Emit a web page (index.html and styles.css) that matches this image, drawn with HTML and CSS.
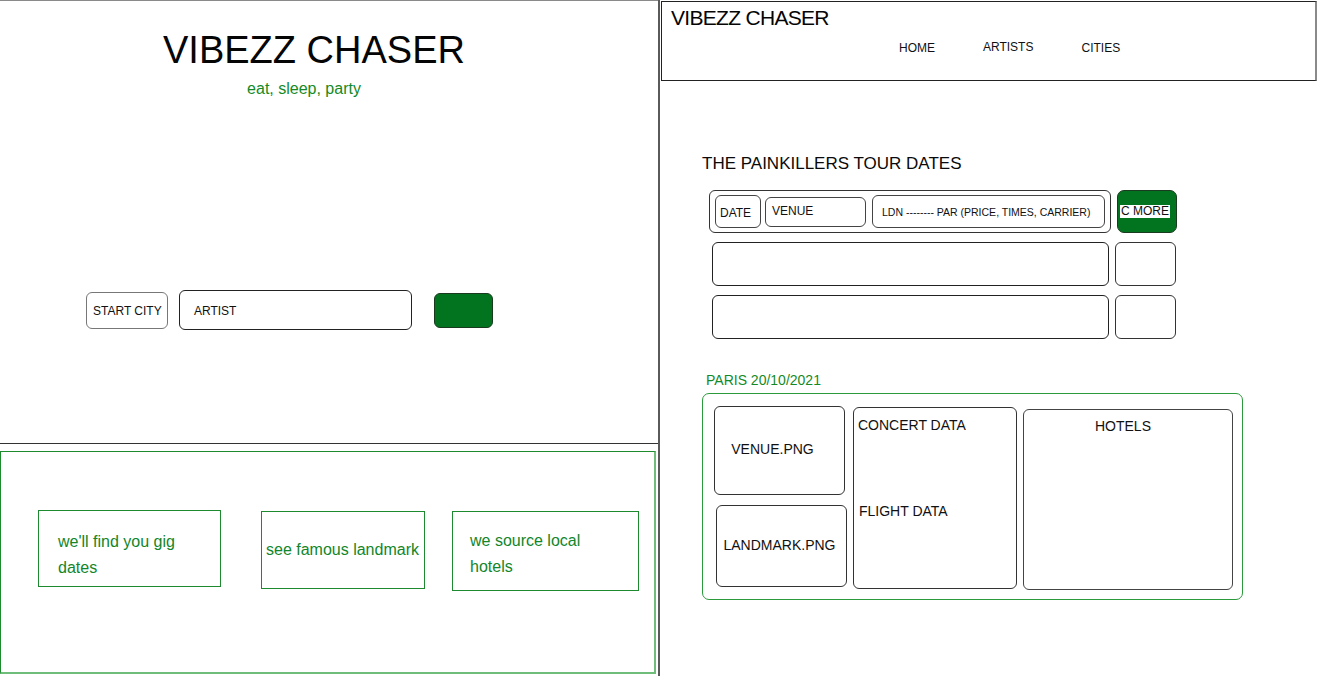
FILE: index.html
```html
<!DOCTYPE html>
<html lang="en">
<head>
<meta charset="utf-8">
<title>Vibezz Chaser wireframe</title>
<link rel="stylesheet" href="styles.css">
</head>
<body>
<div class="page">
  <section class="left">
    <div class="hero">
      <h1 class="hero-title">VIBEZZ CHASER</h1>
      <p class="hero-sub">eat, sleep, party</p>
      <div class="search">
        <div class="field field-city">START CITY</div>
        <div class="field field-artist">ARTIST</div>
        <div class="go-btn"></div>
      </div>
    </div>
    <div class="features">
      <div class="feature feature-1">we'll find you gig<br>dates</div>
      <div class="feature feature-2">see famous landmark</div>
      <div class="feature feature-3">we source local<br>hotels</div>
    </div>
  </section>

  <section class="right">
    <header class="topbar">
      <div class="brand">VIBEZZ CHASER</div>
      <nav class="nav">
        <span class="nav-item">HOME</span>
        <span class="nav-item nav-up">ARTISTS</span>
        <span class="nav-item">CITIES</span>
      </nav>
    </header>

    <div class="tour">
      <h2 class="tour-title">THE PAINKILLERS TOUR DATES</h2>
      <div class="rows">
        <div class="row row-first">
          <div class="row-main row-main-first">
            <div class="cell cell-date">DATE</div>
            <div class="cell cell-venue">VENUE</div>
            <div class="cell cell-flight">LDN -------- PAR (PRICE, TIMES, CARRIER)</div>
          </div>
          <div class="more-btn"><span class="more-label">C MORE</span></div>
        </div>
        <div class="row">
          <div class="row-main"></div>
          <div class="row-side"></div>
        </div>
        <div class="row">
          <div class="row-main"></div>
          <div class="row-side"></div>
        </div>
      </div>

      <div class="detail-label">PARIS 20/10/2021</div>
      <div class="detail">
        <div class="detail-col">
          <div class="pic pic-venue">VENUE.PNG</div>
          <div class="pic pic-landmark">LANDMARK.PNG</div>
        </div>
        <div class="data-box">
          <div class="data-line">CONCERT DATA</div>
          <div class="data-line data-flight">FLIGHT DATA</div>
        </div>
        <div class="hotels">HOTELS</div>
      </div>
    </div>
  </section>
</div>
</body>
</html>
```

FILE: styles.css
```css
* { box-sizing: border-box; }

html, body {
  margin: 0;
  padding: 0;
  background: #ffffff;
}

body {
  font-family: "Liberation Sans", Arial, sans-serif;
  color: #111111;
  width: 1321px;
  height: 676px;
  overflow: hidden;
}

.page {
  display: flex;
  height: 676px;
}

/* ---------- LEFT PANEL ---------- */
.left {
  width: 660px;
  flex-shrink: 0;
  border-right: 2px solid #5a5a5a;
}

.hero {
  height: 444px;
  border-top: 1px solid #8a8a8a;
  border-bottom: 1px solid #333333;
  padding-top: 27px;
}

.hero-title {
  margin: 0;
  padding-right: 30px;
  text-align: center;
  font-size: 38px;
  line-height: 44px;
  font-weight: normal;
  color: #050505;
}

.hero-sub {
  margin: 7px 0 0;
  padding-right: 50px;
  text-align: center;
  font-size: 16px;
  line-height: 20px;
  color: #148a26;
}

.search {
  display: flex;
  align-items: center;
  margin-top: 191px;
  padding-left: 86px;
  height: 40px;
}

.field {
  display: flex;
  align-items: center;
  font-size: 12px;
  color: #111;
  border-radius: 6px;
}

.field-city {
  width: 82px;
  height: 37px;
  padding: 2px 0 0 6px;
  border: 1px solid #777777;
}

.field-artist {
  width: 233px;
  height: 40px;
  margin-left: 11px;
  padding: 2px 0 0 14px;
  border: 1px solid #222222;
}

.go-btn {
  width: 59px;
  height: 35px;
  margin-left: 22px;
  background: #02731f;
  border: 1px solid #1a3a1f;
  border-radius: 6px;
}

.features {
  display: flex;
  align-items: flex-start;
  width: 656px;
  height: 223px;
  margin-top: 7px;
  padding: 58px 0 0 37px;
  border: 1px solid #1d8a2e;
  border-right: 2px solid #6fbd7a;
  border-bottom: 2px solid #6fbd7a;
}

.feature {
  border: 1px solid #1e8a30;
  color: #11862a;
  font-size: 16px;
  line-height: 26px;
}

.feature-1 {
  width: 183px;
  height: 77px;
  padding: 18px 0 0 19px;
}

.feature-2 {
  display: flex;
  align-items: center;
  width: 164px;
  height: 78px;
  margin-left: 40px;
  margin-top: 1px;
  padding-left: 4px;
  white-space: nowrap;
}

.feature-3 {
  width: 187px;
  height: 80px;
  margin-left: 27px;
  margin-top: 1px;
  padding: 16px 0 0 17px;
}

/* ---------- RIGHT PANEL ---------- */
.right {
  flex: 1;
  min-width: 0;
}

.topbar {
  width: 656px;
  height: 80px;
  margin: 1px 0 0 1px;
  border: 1px solid #222222;
  border-right: 2px solid #8a8a8a;
  padding: 3px 0 0 9px;
}

.brand {
  font-size: 21px;
  line-height: 26px;
  letter-spacing: -0.7px;
  color: #050505;
}

.nav {
  display: flex;
  gap: 48px;
  margin-top: 10px;
  padding-left: 228px;
}

.nav-item {
  font-size: 12px;
  line-height: 14px;
  color: #111;
}

.nav-up {
  position: relative;
  top: -1px;
}

.tour {
  padding-left: 42px;
}

.tour-title {
  margin: 73px 0 0;
  font-size: 17px;
  line-height: 20px;
  font-weight: normal;
  color: #0a0a0a;
}

.rows {
  display: flex;
  flex-direction: column;
  gap: 9px;
  margin-top: 16px;
  padding-left: 7px;
}

.row {
  display: flex;
  gap: 6px;
}

.row-main {
  width: 397px;
  height: 44px;
  margin-left: 3px;
  border: 1px solid #222222;
  border-radius: 6px;
}

.row-side {
  width: 61px;
  height: 44px;
  border: 1px solid #333333;
  border-radius: 6px;
}

.row-main-first {
  display: flex;
  align-items: center;
  width: 402px;
  height: 43px;
  margin-left: 0;
  padding-left: 5px;
  border-color: #333333;
}

.cell {
  display: flex;
  align-items: center;
  border: 1px solid #444444;
  border-radius: 6px;
  font-size: 12px;
  color: #111;
}

.cell-date {
  width: 46px;
  height: 33px;
  padding: 3px 0 0 4px;
}

.cell-venue {
  width: 101px;
  height: 30px;
  margin-left: 4px;
  padding: 0 0 2px 6px;
}

.cell-flight {
  width: 233px;
  height: 33px;
  margin-left: 6px;
  padding-left: 9px;
  font-size: 10.5px;
  white-space: nowrap;
}

.more-btn {
  display: flex;
  align-items: center;
  width: 60px;
  height: 43px;
  padding-left: 2px;
  background: #02731f;
  border: 1px solid #1b3b20;
  border-radius: 7px;
}

.more-label {
  background: #ffffff;
  font-size: 12px;
  line-height: 13px;
  padding: 0 1px;
  color: #111;
}

.detail-label {
  margin-top: 33px;
  padding-left: 4px;
  font-size: 14px;
  line-height: 16px;
  color: #148a26;
}

.detail {
  display: flex;
  align-items: flex-start;
  width: 541px;
  height: 207px;
  margin-top: 5px;
  padding: 12px 0 0 11px;
  border: 1px solid #2a9a3b;
  border-radius: 7px;
}

.detail-col {
  display: flex;
  flex-direction: column;
  gap: 10px;
  width: 133px;
}

.pic {
  display: flex;
  align-items: center;
  justify-content: center;
  border: 1px solid #333333;
  border-radius: 6px;
  font-size: 14px;
  color: #111;
}

.pic-venue {
  width: 131px;
  height: 89px;
  padding: 0 14px 4px 0;
}

.pic-landmark {
  width: 131px;
  height: 82px;
  margin-left: 2px;
  padding: 0 4px 3px 0;
}

.data-box {
  width: 164px;
  height: 182px;
  margin-left: 6px;
  margin-top: 1px;
  padding: 9px 0 0 4px;
  border: 1px solid #333333;
  border-radius: 6px;
}

.data-line {
  font-size: 14px;
  line-height: 16px;
  color: #111;
}

.data-flight {
  margin-top: 70px;
  padding-left: 1px;
}

.hotels {
  width: 210px;
  height: 181px;
  margin-left: 6px;
  margin-top: 3px;
  padding: 8px 10px 0 0;
  border: 1px solid #444444;
  border-radius: 6px;
  text-align: center;
  font-size: 14px;
  line-height: 16px;
  color: #111;
}
```
